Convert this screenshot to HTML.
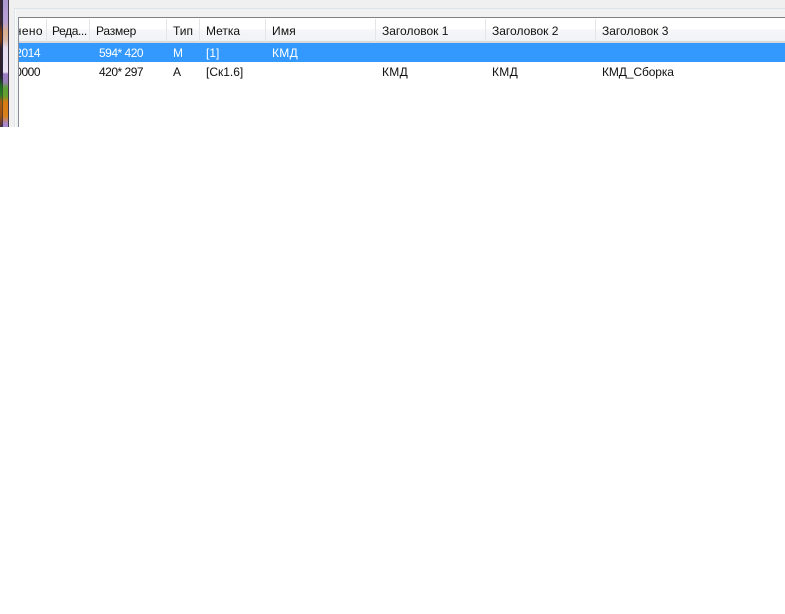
<!DOCTYPE html>
<html>
<head>
<meta charset="utf-8">
<style>
html,body{margin:0;padding:0;background:#fff;width:785px;height:614px;overflow:hidden}
div{position:absolute}
.t{font:12px/14px "Liberation Sans","DejaVu Sans",sans-serif;color:#111;white-space:nowrap}
.w{color:#fff}
.n{letter-spacing:-.5px}
.s{width:1px;top:19px;height:23px;background:#e3e5e8}
</style>
</head>
<body>
<div style="left:0;top:0;width:785px;height:127px;overflow:hidden;background:#f0f0f0">
  <div style="left:0;top:0;width:2px;height:127px;background:linear-gradient(#352535 0,#3a2a30 24px,#7a3c12 32px,#7a3c12 40px,#35202a 48px,#2a2030 76px,#1f6a20 86px,#2a7a25 95px,#a85a10 102px,#9a5010 116px,#4a3040 127px)"></div>
  <div style="left:2px;top:0;width:1px;height:127px;background:linear-gradient(#2a2540 0,#2a2540 78px,#306030 90px,#704020 110px,#3a3050 127px)"></div>
  <div style="left:3px;top:0;width:5px;height:127px;background:linear-gradient(#ad97d2 0,#b8a2d4 22px,#dcae8c 32px,#d8b8a8 40px,#e6dcee 48px,#ebe2f2 72px,#9d7fc4 74px,#9a80b8 82px,#5aa035 88px,#66a030 96px,#d87a12 102px,#d8801a 116px,#a98ad0 124px,#a98ad0 127px)"></div>
  <div style="left:8px;top:0;width:1px;height:127px;background:#403448"></div>
  <div style="left:9px;top:0;width:776px;height:127px;background:#f0f0f0"></div>
  <div style="left:14px;top:8px;width:771px;height:1px;background:#dbe4ea"></div>
  <div style="left:14px;top:9px;width:1px;height:118px;background:#dfe4e7"></div>
  <div style="left:15px;top:9px;width:1px;height:118px;background:#fbfbfb"></div>
  <div style="left:16px;top:9px;width:769px;height:118px;background:#f1f1f1"></div>
  <div style="left:18px;top:17px;width:767px;height:1px;background:#808080"></div>
  <div style="left:18px;top:17px;width:1px;height:110px;background:#87909a"></div>
  <div style="left:19px;top:18px;width:766px;height:109px;background:#fff"></div>
  <div style="left:19px;top:18px;width:766px;height:24px;background:linear-gradient(#ffffff 0,#ffffff 11px,#f4f6f8 12px,#f0f2f5 24px)"></div>
  <div style="left:19px;top:41px;width:766px;height:2px;background:#d8d9db"></div>
  <div style="left:19px;top:43px;width:766px;height:19px;background:#3399ff"></div>

  <div class="s" style="left:46px"></div>
  <div class="s" style="left:89px"></div>
  <div class="s" style="left:166px"></div>
  <div class="s" style="left:199px"></div>
  <div class="s" style="left:265px"></div>
  <div class="s" style="left:375px"></div>
  <div class="s" style="left:485px"></div>
  <div class="s" style="left:595px"></div>

  <div style="left:19px;top:18px;width:27px;height:24px;overflow:hidden">
    <div class="t" style="right:3px;top:6px;letter-spacing:.4px">нено</div>
  </div>
  <div class="t" style="left:52px;top:24px;letter-spacing:-.4px">Реда...</div>
  <div class="t" style="left:96px;top:24px;letter-spacing:-.2px">Размер</div>
  <div class="t" style="left:173px;top:24px">Тип</div>
  <div class="t" style="left:206px;top:24px">Метка</div>
  <div class="t" style="left:272px;top:24px;letter-spacing:.2px">Имя</div>
  <div class="t" style="left:382px;top:24px">Заголовок 1</div>
  <div class="t" style="left:492px;top:24px">Заголовок 2</div>
  <div class="t" style="left:602px;top:24px">Заголовок 3</div>

  <div style="left:19px;top:43px;width:27px;height:40px;overflow:hidden">
    <div class="t w n" style="right:6px;top:3px">2014</div>
    <div class="t n" style="right:6px;top:22px">0000</div>
  </div>
  <div class="t w n" style="left:99px;top:46px">594* 420</div>
  <div class="t w" style="left:173px;top:46px">M</div>
  <div class="t w" style="left:206px;top:46px">[1]</div>
  <div class="t w" style="left:272px;top:46px;letter-spacing:.3px">КМД</div>

  <div class="t n" style="left:99px;top:65px">420* 297</div>
  <div class="t" style="left:173px;top:65px">A</div>
  <div class="t" style="left:206px;top:65px">[Ск1.6]</div>
  <div class="t" style="left:382px;top:65px;letter-spacing:.3px">КМД</div>
  <div class="t" style="left:492px;top:65px;letter-spacing:.3px">КМД</div>
  <div class="t" style="left:602px;top:65px;letter-spacing:-.1px">КМД_Сборка</div>
</div>
</body>
</html>
